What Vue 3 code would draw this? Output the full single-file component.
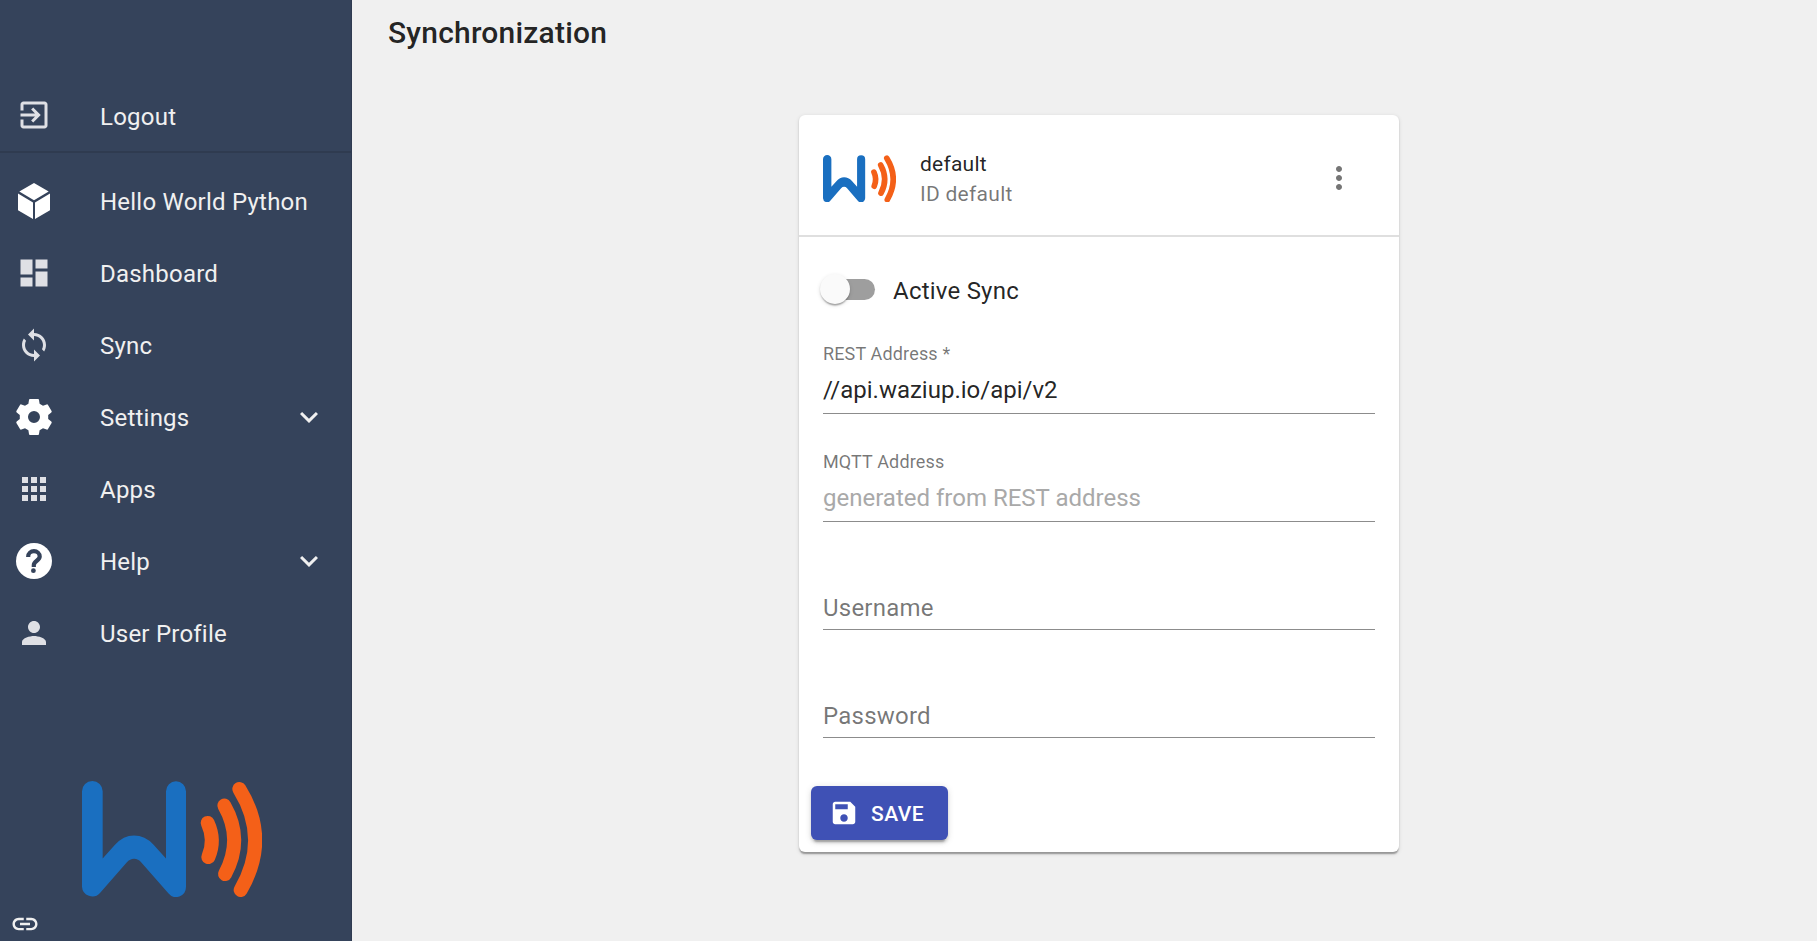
<script setup>
const items = [
  { label: 'Hello World Python', icon: 'cube' },
  { label: 'Dashboard', icon: 'dashboard' },
  { label: 'Sync', icon: 'sync' },
  { label: 'Settings', icon: 'gear', expand: true },
  { label: 'Apps', icon: 'apps' },
  { label: 'Help', icon: 'help', expand: true },
  { label: 'User Profile', icon: 'person' },
]
const icons = {
  dashboard: 'M3 13h8V3H3v10zm0 8h8v-6H3v6zm10 0h8V11h-8v10zm0-18v6h8V3h-8z',
  sync: 'M12 4V1L8 5l4 4V6c3.31 0 6 2.69 6 6 0 1.01-.25 1.97-.7 2.8l1.46 1.46C19.54 15.03 20 13.57 20 12c0-4.42-3.58-8-8-8zm0 14c-3.31 0-6-2.69-6-6 0-1.01.25-1.97.7-2.8L5.24 7.74C4.46 8.97 4 10.43 4 12c0 4.42 3.58 8 8 8v3l4-4-4-4v3z',
  apps: 'M4 8h4V4H4v4zm6 12h4v-4h-4v4zm-6 0h4v-4H4v4zm0-6h4v-4H4v4zm6 0h4v-4h-4v4zm6-10v4h4V4h-4zm-6 4h4V4h-4v4zm6 6h4v-4h-4v4zm0 6h4v-4h-4v4z',
  person: 'M12 12c2.21 0 4-1.79 4-4s-1.79-4-4-4-4 1.79-4 4 1.79 4 4 4zm0 2c-2.67 0-8 1.34-8 4v2h16v-2c0-2.66-5.33-4-8-4z',
}
const fields = [
  { label: 'REST Address *', value: '//api.waziup.io/api/v2' },
  { label: 'MQTT Address', placeholder: 'generated from REST address' },
  { empty: 'Username' },
  { empty: 'Password' },
]
</script>

<template>
  <div class="page">
    <svg width="0" height="0" class="defs">
      <symbol id="brand" viewBox="66 62 540 349" preserveAspectRatio="none">
        <path fill="#1a6fc0" d="M66 93a31 31 0 0 1 62 0V295L165 254Q190 226 222 226Q255 226 280 253L318 295V93a30 30 0 0 1 60 0V380a30 31 0 0 1-53 20L244 307Q235 296 222 296Q210 296 200 307L120 399A31 31 0 0 1 66 380Z" />
        <g fill="none" stroke="#f46018" stroke-width="42" stroke-linecap="round">
          <path d="M443 188Q467 240 445 291" />
          <path d="M493 136Q551 238 495 342" />
          <path d="M538 86Q631 236 542 390" />
        </g>
      </symbol>
    </svg>
    <nav class="drawer">
      <div class="item logout">
        <svg class="ico dim" viewBox="0 0 24 24"><path d="M10.09 15.59L11.5 17l5-5-5-5-1.41 1.41L12.67 11H3v2h9.67l-2.58 2.59zM19 3H5c-1.11 0-2 .9-2 2v4h2V5h14v14H5v-4H3v4c0 1.1.89 2 2 2h14c1.1 0 2-.9 2-2V5c0-1.1-.9-2-2-2z" /></svg>
        <span>Logout</span>
      </div>
      <div class="divider"></div>
      <div v-for="i in items" :key="i.label" class="item">
        <svg v-if="i.icon === 'cube'" class="ico" viewBox="0 0 36 36"><path d="M18 0L32.7 8.6 18 17.2 3.3 8.6zM2 10.6L17 19.4V36L2 27.3zM34 10.6L19 19.4V36L34 27.3z" /></svg>
        <svg v-else-if="i.icon === 'gear'" class="ico" viewBox="0 0 36 36"><path fill-rule="evenodd" d="M14 0H22Q23 0 23 1L23.6 4.8L27 6.7L30.6 5.4Q31.5 5 32 5.9L35.6 12.1Q36 13 35.3 13.6L32.2 16V20L35.3 22.4Q36 23 35.6 23.9L32 30.1Q31.5 31 30.6 30.6L27 29.3L23.6 31.2L23 35Q23 36 22 36H14Q13 36 13 35L12.4 31.2L9 29.3L5.4 30.6Q4.5 31 4 30.1L.4 23.9Q0 23 .7 22.4L3.8 20V16L.7 13.6Q0 13 .4 12.1L4 5.9Q4.5 5 5.4 5.4L9 6.7L12.4 4.8L13 1Q13 0 14 0ZM18 12a6 6 0 1 0 0 12a6 6 0 1 0 0-12z" /></svg>
        <svg v-else-if="i.icon === 'help'" class="ico" viewBox="0 0 36 36"><circle cx="18" cy="18" r="18" /><path class="hook" d="M12.2 14V13.6A5.75 5.4 0 0 1 23.7 13.6C23.7 17.6 17.8 18 17.8 22.2V24" /><circle cx="17.4" cy="27.7" r="2.4" class="dot" /></svg>
        <svg v-else class="ico dim" viewBox="0 0 24 24"><path :d="icons[i.icon]" /></svg>
        <span>{{ i.label }}</span>
        <svg v-if="i.expand" class="chev" viewBox="0 0 24 24"><path d="M16.59 8.59L12 13.17 7.41 8.59 6 10l6 6 6-6z" /></svg>
      </div>
      <svg class="brand-large"><use href="#brand" /></svg>
      <svg class="link" viewBox="0 0 24 24"><path d="M3.9 12c0-1.71 1.39-3.1 3.1-3.1h4V7H7c-2.76 0-5 2.24-5 5s2.24 5 5 5h4v-1.9H7c-1.71 0-3.1-1.39-3.1-3.1zM8 13h8v-2H8v2zm9-6h-4v1.9h4c1.71 0 3.1 1.39 3.1 3.1s-1.39 3.1-3.1 3.1h-4V17h4c2.76 0 5-2.24 5-5s-2.24-5-5-5z" /></svg>
    </nav>
    <main class="main">
      <h1>Synchronization</h1>
      <section class="card">
        <header class="head">
          <svg class="brand-small"><use href="#brand" /></svg>
          <div class="titles">
            <div>default</div>
            <div class="sub">ID default</div>
          </div>
          <svg class="more" viewBox="0 0 24 24"><path d="M12 8c1.1 0 2-.9 2-2s-.9-2-2-2-2 .9-2 2 .9 2 2 2zm0 2c-1.1 0-2 .9-2 2s.9 2 2 2 2-.9 2-2-.9-2-2-2zm0 6c-1.1 0-2 .9-2 2s.9 2 2 2 2-.9 2-2-.9-2-2-2z" /></svg>
        </header>
        <div class="body">
          <div class="toggle">
            <span class="track"><span class="thumb"></span></span>
            <span class="toggle-text">Active Sync</span>
          </div>
          <div v-for="(f, n) in fields" :key="n" class="field">
            <div class="label">{{ f.label }}</div>
            <div v-if="f.value" class="value">{{ f.value }}</div>
            <div v-else-if="f.placeholder" class="value placeholder">{{ f.placeholder }}</div>
            <div v-else class="empty">{{ f.empty }}</div>
          </div>
        </div>
        <button class="save">
          <svg viewBox="0 0 24 24"><path d="M17 3H5c-1.11 0-2 .9-2 2v14c0 1.1.89 2 2 2h14c1.1 0 2-.9 2-2V7l-4-4zm-5 16c-1.66 0-3-1.34-3-3s1.34-3 3-3 3 1.34 3 3-1.34 3-3 3zm3-10H5V5h10v4z" /></svg>
          <span>SAVE</span>
        </button>
      </section>
    </main>
  </div>
</template>

<style>
body { background: #f0f0f0; overflow: hidden; }
</style>
<style scoped>
.page {
  display: flex;
  height: 941px;
  background: #f0f0f0;
  font-family: Roboto, "Liberation Sans", sans-serif;
  font-size: 24px;
  line-height: 36px;
  letter-spacing: 0.225px;
  color: rgba(0, 0, 0, 0.87);
}
* { box-sizing: border-box; }
svg { display: block; flex: none; }
.defs { position: absolute; }
.drawer {
  display: flex;
  flex-direction: column;
  flex: none;
  width: 352px;
  padding-top: 79px;
  background: #35435b;
  border-right: 1px solid #2f3b51;
  color: #f0f0f0;
}
.item { display: flex; align-items: center; height: 72px; padding: 0 24px 0 16px; }
.item span { margin-left: 48px; flex: 1; padding-top: 1px; }
.logout span { padding-top: 3px; }
.divider { height: 2px; background: #2f3b50; margin-bottom: 12px; }
.ico { width: 36px; height: 36px; fill: #fff; }
.ico.dim { fill: #dfe0e5; }
.hook { fill: none; stroke: #35435b; stroke-width: 4.2; }
.dot { fill: #35435b; }
.chev { width: 36px; height: 36px; fill: #f0f0f0; }
.brand-large { width: 180px; height: 116px; margin: 112px 0 0 82px; }
.link { width: 30px; height: 30px; margin: 12px 0 0 10px; fill: #f0f0f0; }
.main { flex: 1; display: flex; flex-direction: column; padding-left: 36px; }
h1 { margin: 9px 0 0; font-size: 30px; font-weight: 500; line-height: 48px; height: 106px; letter-spacing: 0.2px; }
.card {
  width: 600px;
  height: 737px;
  margin-left: 411px;
  background: #fff;
  border-radius: 6px;
  box-shadow: 0 3px 1.5px -1.5px rgba(0, 0, 0, 0.2), 0 1.5px 1.5px rgba(0, 0, 0, 0.14), 0 1.5px 4.5px rgba(0, 0, 0, 0.12);
}
.head { display: flex; align-items: center; height: 122px; padding: 8px 42px 0 24px; border-bottom: 2px solid #dfdfdf; }
.brand-small { width: 73px; height: 47.5px; margin-top: -1.5px; }
.titles { flex: 1; margin-left: 24px; font-size: 21px; line-height: 30px; }
.sub { color: rgba(0, 0, 0, 0.54); letter-spacing: 0.27px; }
.more { width: 36px; height: 36px; margin-top: -2px; fill: #757575; }
.body { padding: 0 24px; }
.toggle { display: flex; align-items: center; height: 105px; }
.toggle-text { padding-top: 2px; }
.track { display: block; width: 51px; height: 21px; margin: 0 18px 0 1px; border-radius: 11px; background: #9e9e9e; }
.thumb {
  display: block;
  width: 30px;
  height: 30px;
  margin: -5px 0 0 -4px;
  border-radius: 50%;
  background: #fafafa;
  box-shadow: 0 3px 1.5px -1.5px rgba(0, 0, 0, 0.2), 0 1.5px 1.5px rgba(0, 0, 0, 0.14), 0 1.5px 4.5px rgba(0, 0, 0, 0.12);
}
.field { height: 72px; margin-bottom: 36px; border-bottom: 1px solid #8c8c8c; }
.field:last-child { margin-bottom: 0; }
.label { height: 24px; font-size: 18px; line-height: 24px; letter-spacing: 0.15px; color: rgba(0, 0, 0, 0.54); }
.value { padding-top: 6px; letter-spacing: 0; }
.placeholder { color: #a9a9a9; }
.empty { padding-top: 8px; color: rgba(0, 0, 0, 0.54); }
.save {
  display: flex;
  align-items: center;
  width: 137px;
  height: 54px;
  margin: 48px 0 0 12px;
  padding: 0 0 0 18px;
  border: 0;
  border-radius: 6px;
  background: #3f51b5;
  color: #fff;
  font: 500 21px Roboto, sans-serif;
  letter-spacing: 0.5px;
  box-shadow: 0 4.5px 1.5px -3px rgba(0, 0, 0, 0.2), 0 3px 3px rgba(0, 0, 0, 0.14), 0 1.5px 7.5px rgba(0, 0, 0, 0.12);
}
.save svg { width: 30px; height: 30px; margin-right: 12px; fill: #fff; }
.save span { padding-top: 2px; }
</style>
